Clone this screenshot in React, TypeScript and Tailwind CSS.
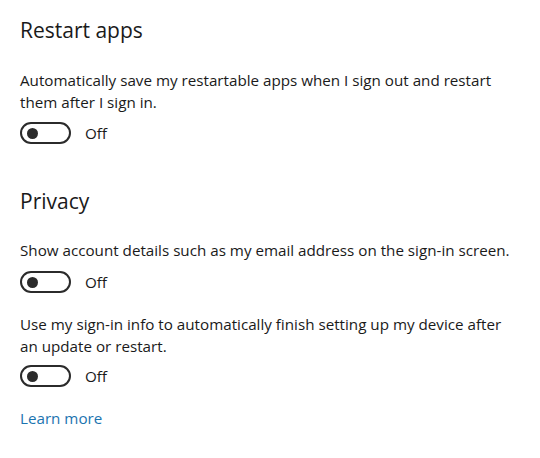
import React from 'react';

function Toggle({ label = 'Off' }: { label?: string }) {
  return (
    <div className="flex items-center h-[22px]">
      <div className="w-[51px] h-[22px] rounded-full border-2 border-[#2b2b2b] flex items-center pl-[5px]">
        <div className="w-[11px] h-[11px] rounded-full bg-[#2b2b2b]" />
      </div>
      <span className="ml-[14px] text-[15.2px] text-[#1a1a1a]">{label}</span>
    </div>
  );
}

export default function App() {
  return (
    <div
      className="w-[540px] h-[458px] bg-white px-[20px] pt-[16px] text-[#1a1a1a]"
      style={{ fontFamily: '"Open Sans", "Noto Sans", sans-serif' }}
    >
      {/* Restart apps */}
      <h2 className="text-[21px] leading-[28px]">Restart apps</h2>
      <p className="mt-[25px] w-[494px] text-[15.2px] leading-[22px]">
        Automatically save my restartable apps when I sign out and restart them after I sign in.
      </p>
      <div className="mt-[9px]">
        <Toggle />
      </div>

      {/* Privacy */}
      <h2 className="mt-[43px] text-[21px] leading-[28px]">Privacy</h2>
      <p className="mt-[24px] w-[494px] text-[15.2px] leading-[22px]">
        Show account details such as my email address on the sign-in screen.
      </p>
      <div className="mt-[10px]">
        <Toggle />
      </div>
      <p className="mt-[20px] w-[494px] text-[15.2px] leading-[22px]">
        Use my sign-in info to automatically finish setting up my device after an update or restart.
      </p>
      <div className="mt-[8px]">
        <Toggle />
      </div>
      <a className="block mt-[20px] text-[15.2px] leading-[22px] text-[#1b74b0]">Learn more</a>
    </div>
  );
}
